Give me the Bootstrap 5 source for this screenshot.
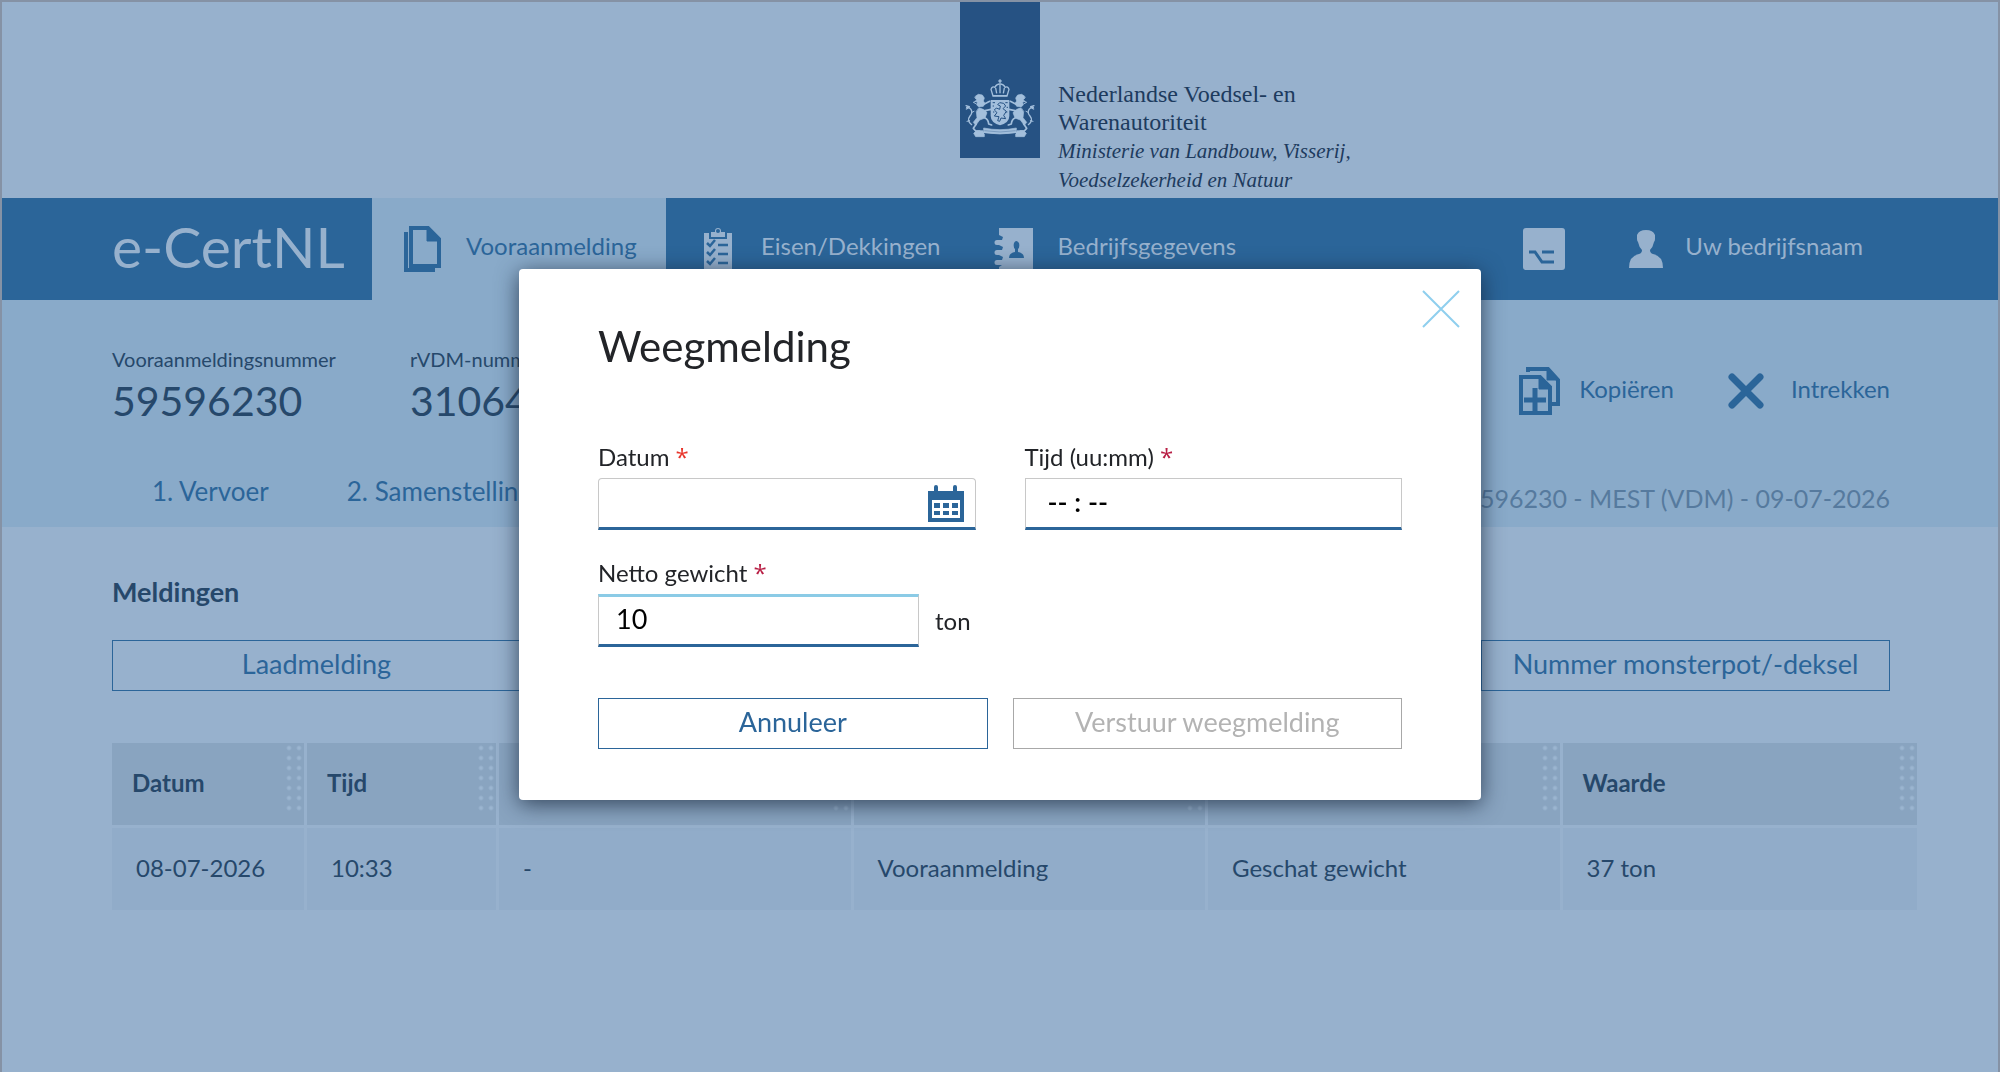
<!DOCTYPE html>
<html lang="nl">
<head>
<meta charset="utf-8">
<meta name="viewport" content="width=device-width, initial-scale=1">
<title>e-CertNL - Weegmelding</title>
<link rel="stylesheet" href="https://cdn.jsdelivr.net/npm/bootstrap@5.3.0/dist/css/bootstrap.min.css">
<style>
:root{--page:#97b1cd;--band:#89aac9;--blue:#2b6599;--ink:#26486b;}
body{font-family:Lato,"Open Sans",sans-serif;font-size:24px;line-height:32px;background:var(--page);color:var(--ink);}
a{color:var(--blue);text-decoration:none;}
.frame{min-height:100vh;border:2px solid #8592a5;border-bottom:0;}
.gov-head{height:196px;padding-left:calc(50% - 40px);}
.gov-ribbon{width:80px;height:156px;background:#265283;flex:none;}
.gov-ribbon svg{display:block;width:80px;height:156px;}
.gov-name{font-family:"Liberation Serif",serif;font-size:24px;line-height:28px;color:#1d3b5e;padding:78px 0 0 18px;}
.gov-name i{font-size:21px;}
.topnav{min-height:102px;background:var(--blue);}
.topnav a,.topnav .brand-name{color:var(--page);}
.topnav span{padding-bottom:6px;}
.brand-box{width:370px;padding-left:110px;}
.brand-name{font-size:57px;line-height:64px;}
.tab-on{width:294px;background:var(--band);padding-left:30px;gap:23px;}
.topnav a.tab-on{color:var(--blue);}
.tab-off{padding-left:37px;gap:28px;}
.tab-off + .tab-off{padding-left:52px;gap:24px;}
.user-area{padding-right:135px;gap:64px;}
.user-area a{gap:22px;}
.sub{background:var(--band);min-height:227px;padding:47px 108px 8px 110px;}
.num-label{font-size:20px;line-height:24px;margin-bottom:6px;}
.num-val{font-size:41px;line-height:48px;}
.num-gap{gap:74px;}
.steps{font-size:26px;padding-left:40px;gap:78px;margin-top:50px;}
.summary{font-size:25px;margin-top:66px;color:#567a9e;}
.acts{gap:54px;padding-top:19px;}
.acts a{gap:19px;}
.acts a + a{gap:27px;}
.acts span{padding-bottom:4px;}
.main{padding:49px 81px 0 110px;}
.inner{padding-right:27px;}
.sect{font-size:27px;line-height:32px;font-weight:700;margin-bottom:32px;color:var(--ink);}
.btn-line{--bs-btn-color:var(--blue);--bs-btn-border-color:var(--blue);--bs-btn-border-width:1px;--bs-btn-border-radius:0;--bs-btn-font-size:27px;--bs-btn-line-height:32px;--bs-btn-padding-y:7px;--bs-btn-padding-x:8px;--bs-btn-disabled-color:#b3b3b3;--bs-btn-disabled-border-color:#a8a8a8;--bs-btn-disabled-opacity:1;padding-bottom:10px;}
.main .btn-line{width:23%;}
.grid-data{width:100%;table-layout:fixed;margin-top:52px;border-collapse:separate;border-spacing:0;}
.grid-data th,.grid-data td{border-right:3px solid var(--page);}
.grid-data th:last-child,.grid-data td:last-child{border-right:0;}
.grid-data th{height:82px;padding:0 20px;background:#89a4c0;vertical-align:top;line-height:80px;}
.grid-data .dots{float:right;width:20px;height:70px;margin-right:-20px;background:radial-gradient(circle,#9bb5d0 1px,transparent 3px) 0 0/10px 10px;}
.grid-data tbody td{border-top:3px solid var(--page);height:85px;padding:0 24px 2px;background:#91acc9;}
.c-first{width:195px;}
.c-small{width:192px;}
.overlay{--bs-modal-width:962px;--bs-modal-margin:0;}
.overlay .modal-dialog{margin:269px auto 0;}
.overlay .modal-content{border:0;border-radius:4px;padding:52px 79px 51px;color:#222428;box-shadow:0 4px 22px rgba(20,35,55,.75);}
.dlg-title{font-size:42px;line-height:50px;font-weight:400;margin-bottom:72px;}
.x-btn{position:absolute;right:20px;top:20px;width:40px;height:40px;padding:0;border:0;background:none;}
.x-btn svg,.cal-btn svg{display:block;}
.two-cols{gap:49px;margin-bottom:29px;}
.lab{line-height:28px;margin-bottom:7px;display:block;}
.lab b{color:#b81f45;font-family:"Open Sans",sans-serif;font-weight:400;line-height:24px;}
.lab b.hot{color:#e8352b;}
.fld{height:52px;border:1px solid #c8c8c8;border-bottom:3px solid var(--blue);border-radius:0;padding:0 16px 4px 17px;font-size:27px;color:#000;}
.fld-time{padding-left:22px;font-weight:600;}
.fld-date{border-radius:4px 4px 0 0;}
.fld-now{width:321px;border-top:3px solid #8bcbe6;height:53px;}
.fld::placeholder{color:#000;opacity:1;}
.cal-btn{position:absolute;right:12px;top:7px;border:0;background:none;padding:0;}
.dlg-acts{gap:25px;margin-top:51px;}
</style>
<script src="https://cdn.jsdelivr.net/npm/bootstrap@5.3.0/dist/js/bootstrap.bundle.min.js"></script>
</head>
<body>
<div class="frame">
  <header class="gov-head d-flex">
    <div class="gov-ribbon">
      <svg viewBox="15 0 240 468" aria-label="Rijkswapen">
        <defs>
          <g id="lion" fill="none" stroke="#a3bfdc" stroke-linecap="round" stroke-linejoin="round">
            <path d="M62 282l8-5 12 2 6 9-3 9 5 7-5 9-13 2-7-6 2-8-6-3 4-5-5-5z" fill="#a3bfdc" stroke-width="2"/>
            <path d="M62 298l-7 3 8 4" stroke-width="3"/>
            <path d="M72 318q16 2 24 14l-6 16-16 6-12 16-7-9 11-14-2-18z" fill="#a3bfdc" stroke-width="2"/>
            <path d="M84 308l20-10M90 326l18-4M90 348q10 4 11 18l9 3M64 366l-9 13 7 8h12" stroke-width="5"/>
            <path d="M50 368q-16-12-5-26 9-10 3-20-6-7-13-6M33 311l10 3M34 321l8-4" stroke-width="4"/>
            <path d="M44 356l-8 2M49 332l8-4" stroke-width="3"/>
          </g>
        </defs>
        <use href="#lion"/>
        <use href="#lion" transform="translate(270 0) scale(-1 1)"/>
        <path d="M107 294h56v48q0 20-28 28-28-8-28-28z" fill="#a3bfdc"/>
        <path d="M118 342l8-10-8-8 6-6 10 4 2-10-8-4 6-6 12 2 6 8-8 8 10 8-8 12 6 10-14-2-4 10-6-2 4-12z" fill="none" stroke="#265283" stroke-width="3"/>
        <path d="M113 302h7M113 312h4M151 302h7M155 316h4M152 330h5M114 330h4" stroke="#265283" stroke-width="3"/>
        <path d="M114 282l-6-20q3-10 12-6 4-10 15-10t15 10q9-4 12 6l-6 20z" fill="none" stroke="#a3bfdc" stroke-width="4"/>
        <path d="M135 232v12M130 237h10M122 258l3 16M135 248v26M148 258l-3 16M114 281h42" stroke="#a3bfdc" stroke-width="4" fill="none"/>
        <path d="M86 378q49 10 98 0v14q-49 8-98 0zM84 386H64l-8 8 6 10h26v-8M186 386h20l8 8-6 10h-26v-8" fill="#a3bfdc" stroke="#a3bfdc" stroke-width="2"/>
        <path d="M88 386q47 8 94 0" stroke="#7a9cc0" stroke-width="3" fill="none"/>
      </svg>
    </div>
    <div class="gov-name">Nederlandse Voedsel- en<br>Warenautoriteit<br><i>Ministerie van Landbouw, Visserij,<br>Voedselzekerheid en Natuur</i></div>
  </header>

  <nav class="topnav d-flex align-items-stretch">
    <div class="brand-box d-flex align-items-center"><span class="brand-name">e-CertNL</span></div>
    <a href="#" class="tab-on d-flex align-items-center">
      <svg width="41" height="48" viewBox="0 0 41 48" fill="none" stroke="currentColor" stroke-width="4"><path d="M9 3h17l11 11v27H9z"/><path d="M25 2v14h13z" fill="currentColor" stroke-width="1"/><path d="M4 7v38h29"/></svg>
      <span>Vooraanmelding</span>
    </a>
    <a href="#" class="tab-off d-flex align-items-center">
      <svg width="30" height="48" viewBox="0 0 30 48"><path d="M1 8h28v39H1z" fill="currentColor"/><path d="M7 6h4a4 4 0 0 1 8 0h4v7H7z" fill="currentColor" stroke="#2b6599" stroke-width="2"/><circle cx="15" cy="6" r="2" fill="#2b6599"/><g stroke="#2b6599" stroke-width="2.500" fill="none"><path d="M4 18l3 3 5-6M4 27l3 3 5-6M4 36l3 3 5-6M15 20h10M15 29h10M15 38h10"/></g></svg>
      <span>Eisen/Dekkingen</span>
    </a>
    <a href="#" class="tab-off d-flex align-items-center">
      <svg width="41" height="44" viewBox="0 0 41 44"><path d="M6 1h34v42H6v-3l3-2H4a2 2 0 0 1 0-5h5l1-3-4-2H4a2 2 0 0 1 0-5h5l1-3-4-2H4a2 2 0 0 1 0-5h5l1-3-4-2z" fill="currentColor"/><path d="M16 31q0-5 6-6v-3q-2-2-1-6 2-4 5 0 1 4-1 6v3q6 1 6 6z" fill="#2b6599"/></svg>
      <span>Bedrijfsgegevens</span>
    </a>
    <div class="user-area d-flex align-items-center ms-auto">
      <a href="#" aria-label="Optie"><svg class="d-block" width="42" height="42" viewBox="0 0 42 42"><rect width="42" height="42" rx="3" fill="currentColor"/><path d="M6 24h6l7 10h12M19 24h12" fill="none" stroke="#2b6599" stroke-width="3"/></svg></a>
      <a href="#" class="d-flex align-items-center">
        <svg width="34" height="38" viewBox="0 0 34 38" fill="currentColor"><path d="M0 38q0-12 10-14 3-1 3-4-3-3-4-8-1-1-1-3V5q2-5 9-5t9 5v4q0 2-1 3-1 5-4 8 0 3 3 4 10 2 10 14z"/></svg>
        <span>Uw bedrijfsnaam</span>
      </a>
    </div>
  </nav>

  <section class="sub d-flex justify-content-between">
    <div>
      <div class="d-flex num-gap">
        <div><div class="num-label">Vooraanmeldingsnummer</div><div class="num-val">59596230</div></div>
        <div><div class="num-label">rVDM-nummer</div><div class="num-val">31064</div></div>
      </div>
      <div class="steps d-flex"><a href="#">1. Vervoer</a><a href="#">2. Samenstelling</a></div>
    </div>
    <div class="d-flex flex-column align-items-end">
      <div class="acts d-flex">
        <a href="#" class="d-flex align-items-center">
          <svg width="41" height="50" viewBox="0 0 41 50" fill="none" stroke="currentColor" stroke-width="4"><path d="M9 6V3h20l10 11v24h-6"/><path d="M28 1v13h11z" fill="currentColor" stroke-width="1"/><path d="M2 11h19l10 10v26H2z"/><path d="M20 10v13h12z" fill="currentColor" stroke-width="1"/><path d="M16 22v24M5 34h22" stroke-width="5"/></svg>
          <span>Kopiëren</span>
        </a>
        <a href="#" class="d-flex align-items-center">
          <svg width="36" height="36" viewBox="0 0 36 36" fill="none" stroke="currentColor" stroke-width="7" stroke-linecap="round"><path d="M4 4l28 28M32 4L4 32"/></svg>
          <span>Intrekken</span>
        </a>
      </div>
      <div class="summary">59596230 - MEST (VDM) - 09-07-2026</div>
    </div>
  </section>

  <main class="main">
    <div class="inner">
      <h2 class="sect">Meldingen</h2>
      <div class="d-flex justify-content-between">
        <button type="button" class="btn btn-line">Laadmelding</button>
        <button type="button" class="btn btn-line text-nowrap">Nummer monsterpot/-deksel</button>
      </div>
    </div>
    <table class="grid-data">
      <colgroup><col class="c-first"><col class="c-small"><col><col><col><col></colgroup>
      <thead><tr>
        <th scope="col"><span class="dots"></span>Datum</th><th scope="col"><span class="dots"></span>Tijd</th><th scope="col"><span class="dots"></span></th><th scope="col"><span class="dots"></span></th><th scope="col"><span class="dots"></span></th><th scope="col"><span class="dots"></span>Waarde</th>
      </tr></thead>
      <tbody><tr><td>08-07-2026</td><td>10:33</td><td>-</td><td>Vooraanmelding</td><td>Geschat gewicht</td><td>37 ton</td></tr></tbody>
    </table>
  </main>
</div>

<div class="modal overlay d-block" role="dialog" aria-labelledby="dlgTitle">
  <div class="modal-dialog">
    <form class="modal-content">
      <button type="button" class="x-btn" aria-label="Sluiten"><svg width="40" height="40" viewBox="0 0 40 40" stroke="#8fcfee" stroke-width="2"><path d="M2 2l36 36M38 2L2 38"/></svg></button>
      <h1 class="dlg-title" id="dlgTitle">Weegmelding</h1>
      <div class="d-flex two-cols">
        <div class="flex-fill w-50">
          <label class="lab" for="datum">Datum <b class="hot">*</b></label>
          <div class="position-relative">
            <input class="form-control fld fld-date" id="datum" type="text">
            <button type="button" class="cal-btn" aria-label="Kalender"><svg width="36" height="37" viewBox="0 0 36 37"><path d="M0 6h6V2a2 2 0 0 1 4 0v4h15V2a2 2 0 0 1 4 0v4h7v31H0z" fill="#2b6599"/><path d="M4 15h28v18H4z" fill="#fff"/><path d="M6 18h6v5H6zm9 0h6v5h-6zm9 0h6v5h-6zM6 26h6v4H6zm9 0h6v4h-6zm9 0h6v4h-6z" fill="#2b6599"/></svg></button>
          </div>
        </div>
        <div class="flex-fill w-50">
          <label class="lab" for="tijd">Tijd (uu:mm) <b>*</b></label>
          <input class="form-control fld fld-time" id="tijd" type="text" placeholder="-- : --">
        </div>
      </div>
      <label class="lab" for="netto">Netto gewicht <b>*</b></label>
      <div class="d-flex align-items-center gap-3">
        <input class="form-control fld fld-now" id="netto" type="text" value="10"><span>ton</span>
      </div>
      <div class="d-flex dlg-acts">
        <button type="button" class="btn btn-line flex-fill w-50">Annuleer</button>
        <button type="submit" class="btn btn-line flex-fill w-50" disabled>Verstuur weegmelding</button>
      </div>
    </form>
  </div>
</div>
</body>
</html>
